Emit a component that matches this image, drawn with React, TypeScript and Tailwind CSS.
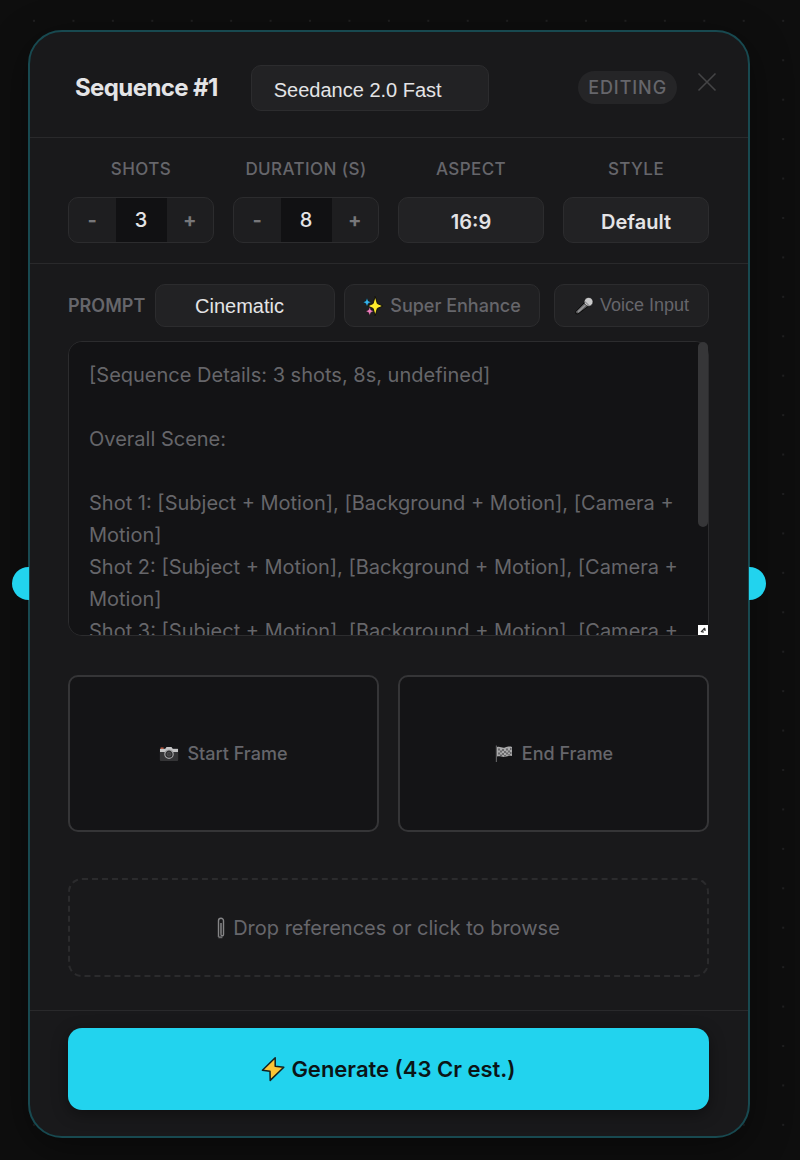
import { useState, type ReactNode } from 'react';

const template = `[Sequence Details: 3 shots, 8s, undefined]

Overall Scene:

Shot 1: [Subject + Motion], [Background + Motion], [Camera + Motion]
Shot 2: [Subject + Motion], [Background + Motion], [Camera + Motion]
Shot 3: [Subject + Motion], [Background + Motion], [Camera + Motion]

Style: [Lighting], [Mood], [Color]

Notes:
`;

const selectClass =
  "appearance-none rounded-[10px] border border-[#2c2c2e] bg-[#222224] text-xl text-[#e4e4e6] outline-none";
const labelClass = "text-[17px] leading-6 font-medium tracking-wide text-[#66666b]";

function Sparkles() {
  return (
    <svg width="20" height="20" viewBox="0 0 20 20" aria-hidden="true">
      <path d="M12.2.4 14.3 7.600 20 10 14.300 12.400 12.200 19.600 10.100 12.400 4.600 10 10.100 7.600Z" fill="#fdea2c" stroke="#0a0a0a" strokeWidth=".9" strokeLinejoin="round" />
      <path d="M4 2 5.200 5 8 6.200 5.200 7.400 4 10.400 2.800 7.400 0 6.200 2.800 5Z" fill="#35b6ee" stroke="#0a0a0a" strokeWidth=".4" />
      <path d="M6.700 11 7.900 14 10.700 15.200 7.900 16.400 6.700 19.400 5.500 16.400 2.700 15.200 5.500 14Z" fill="#f17fc0" stroke="#0a0a0a" strokeWidth=".4" />
    </svg>
  );
}

function Microphone() {
  return (
    <svg width="20" height="20" viewBox="0 0 20 20" aria-hidden="true">
      <path d="M10.500 6.500 14 10.500 4 18 1.800 17.600 1.600 15.600Z" fill="#5b5b5d" stroke="#0a0a0a" strokeWidth="1" strokeLinejoin="round" />
      <path d="m11.500 8.800-7.500 7.200" stroke="#929294" strokeWidth="1.800" />
      <circle cx="14.600" cy="5.800" r="4.400" fill="#c9c9ca" stroke="#0a0a0a" strokeWidth=".6" />
      <path d="m11 5.600 4 4" stroke="#8b8b8e" strokeWidth="1.200" />
    </svg>
  );
}

function Camera() {
  return (
    <svg width="20" height="18" viewBox="0 0 20 18" aria-hidden="true">
      <rect x=".8" y="3" width="18.400" height="13" rx="1" fill="#343436" />
      <path d="M1 7V4h5.200l1.300-2h5l1.300 2H19v3Z" fill="#c4c4c5" />
      <path d="M1.600 3.200h3" stroke="#c06048" strokeWidth="1.500" />
      <circle cx="10" cy="9.200" r="4.200" fill="#29292b" stroke="#a3a3a5" strokeWidth="1.200" />
      <circle cx="10" cy="9.200" r="2" fill="#3c3c3e" stroke="#555557" strokeWidth=".8" />
    </svg>
  );
}

function Flag() {
  return (
    <svg width="20" height="20" viewBox="0 0 20 20" aria-hidden="true">
      <path d="M2.400 1.500V18" stroke="#5d5d5f" strokeWidth="1.200" />
      <path d="M3 3c3-1.200 5 1.400 8 .5 2.600-.8 4.400-1.500 7-.5v9c-3-1-4.500.3-7 .8-3 .5-5-1.300-8-.3Z" fill="#a9a9aa" />
      <path d="M4 4.500h2v2H4zm4 .5h2v2H8zm4-.5h2v2h-2zm4-.5h1.500v2H16zM6 6.500h2v2H6zm4 .5h2v2h-2zm4-.5h2v2h-2zM4 8.500h2v2H4zm4 .5h2v2H8zm4-.5h2v2h-2zm4-.5h1.500v2H16zM6 10.500h2v1.500H6zm4 .5h2v1.500h-2zm4-.8h2v1.300h-2z" fill="#69696b" />
    </svg>
  );
}

function Paperclip() {
  return (
    <svg width="8" height="22" viewBox="0 0 8 22" aria-hidden="true">
      <path d="M1.500 20V3.800a2.500 2.500 0 0 1 5 0V17.500a1.200 1.200 0 0 1-2.500 0V6" fill="none" stroke="#858587" strokeWidth="1.400" />
      <path d="M1.400 20.300h4M4 6v10" stroke="#6a6a6c" strokeWidth="2" />
    </svg>
  );
}

function Bolt() {
  return (
    <svg width="24" height="26" viewBox="0 0 24 26" aria-hidden="true">
      <path d="M14.200 1.800 1.400 14.200l7.600 1L9.200 24.400 22.800 11.200l-8.600-1Z" fill="#fcc436" stroke="#14201f" strokeWidth="1.500" strokeLinejoin="round" />
    </svg>
  );
}

function Stepper({ id, label, initial }: { id: string; label: string; initial: number }) {
  const [value, setValue] = useState(initial);

  return (
    <div className="flex flex-col items-center gap-4">
      <label htmlFor={id} className={labelClass}>{label}</label>
      <div className="flex h-[46px] w-full overflow-hidden rounded-[10px] border border-[#2c2c2e] bg-[#1e1e20]">
        <button
          type="button"
          aria-label={`Decrease ${label}`}
          className="flex-1 text-xl font-bold text-[#77777a]"
          onClick={() => setValue(Math.max(1, value - 1))}
        >
          -
        </button>
        <input
          id={id}
          className="w-[51px] bg-[#111113] text-center text-xl font-medium text-[#e4e4e6] outline-none"
          value={value}
          onChange={(e) => setValue(Number(e.target.value) || 1)}
        />
        <button
          type="button"
          aria-label={`Increase ${label}`}
          className="flex-1 text-xl font-bold text-[#77777a]"
          onClick={() => setValue(value + 1)}
        >
          +
        </button>
      </div>
    </div>
  );
}

function SelectField({ id, label, options }: { id: string; label: string; options: string[] }) {
  return (
    <div className="flex flex-col items-center gap-4">
      <label htmlFor={id} className={labelClass}>{label}</label>
      <select id={id} className={selectClass + " h-[46px] w-full pt-1 text-center font-semibold"}>
        {options.map((option) => (
          <option key={option}>{option}</option>
        ))}
      </select>
    </div>
  );
}

function FrameButton({ icon, children }: { icon: ReactNode; children: ReactNode }) {
  return (
    <button
      type="button"
      className="flex h-[157px] items-center justify-center gap-2 rounded-[10px] border-2 border-[#353537] bg-[#141416] text-[18px] font-medium text-[#66666b]"
    >
      {icon}
      {children}
    </button>
  );
}

export default function App() {
  const [prompt, setPrompt] = useState(template);

  return (
    <main className="relative min-h-screen bg-[#0e0e0e] pt-[30px] pr-[50px] pb-[22px] pl-7 font-['Inter',sans-serif]">
      {/* Canvas dots */}
      <svg className="absolute inset-0 h-full w-full" aria-hidden="true">
        <defs>
          <pattern id="dots" x="14.300" y="1.100" width="39.430" height="39.430" patternUnits="userSpaceOnUse">
            <circle cx="19.700" cy="19.700" r="1" fill="#252526" />
          </pattern>
        </defs>
        <rect width="100%" height="100%" fill="url(#dots)" />
      </svg>

      <section className="relative rounded-[34px] border-2 border-[#184950] bg-[#19191b] shadow-[0_10px_40px_rgba(0,0,0,0.4)]">
        {/* Connection handles */}
        <span className="absolute top-[535px] -left-[18px] h-[33px] w-[17px] rounded-l-full bg-[#22d3ee]" />
        <span className="absolute top-[535px] -right-[18px] h-[33px] w-[17px] rounded-r-full bg-[#22d3ee]" />

        {/* Header */}
        <header className="flex h-[106px] items-center border-b border-[#29292b] pt-[6px] pr-[31px] pl-[45px]">
          <h1 className="text-2xl font-bold tracking-tight whitespace-nowrap text-[#e4e4e6]">Sequence #1</h1>
          <select
            aria-label="Model"
            className={selectClass + " ml-[33px] h-[46px] w-[238px] pt-1 pl-[22px] font-['Liberation_Sans',sans-serif]"}
          >
            <option>Seedance 2.0 Fast</option>
            <option>Seedance 2.0</option>
          </select>
          <span className="ml-auto flex h-[33px] items-center rounded-full bg-[#252527] px-[10px] text-[18px] font-medium tracking-wider text-[#66666b]">
            EDITING
          </span>
          <button type="button" aria-label="Close" className="mb-3 ml-5">
            <svg width="20" height="20" viewBox="0 0 20 20" aria-hidden="true">
              <path d="m1.500 1.500 17 17m0-17-17 17" stroke="#444446" strokeWidth="1.600" />
            </svg>
          </button>
        </header>

        {/* Sequence settings */}
        <div className="grid grid-cols-4 gap-[19px] border-b border-[#29292b] pt-[19px] pr-[39px] pb-5 pl-[38px]">
          <Stepper id="shots" label="SHOTS" initial={3} />
          <Stepper id="duration" label="DURATION (S)" initial={8} />
          <SelectField id="aspect" label="ASPECT" options={['16:9', '9:16', '1:1']} />
          <SelectField id="style" label="STYLE" options={['Default', 'Anime', 'Noir']} />
        </div>

        <div className="pt-5 pr-[39px] pb-[33px] pl-[38px]">
          {/* Prompt toolbar */}
          <div className="flex h-[43px] items-center">
            <label htmlFor="prompt" className="w-[87px] text-[18px] font-semibold text-[#66666b]">PROMPT</label>
            <select
              aria-label="Prompt preset"
              className={selectClass + " h-full w-[180px] pr-[11px] text-center font-['Liberation_Sans',sans-serif]"}
            >
              <option>Cinematic</option>
              <option>Documentary</option>
            </select>
            <button
              type="button"
              className="ml-[9px] flex h-full w-[196px] items-center justify-center gap-[7px] rounded-[10px] border border-[#2c2c2e] bg-[#202022] text-[18px] font-medium whitespace-nowrap text-[#66666b]"
            >
              <Sparkles />
              Super Enhance
            </button>
            <button
              type="button"
              className="ml-auto flex h-full w-[155px] items-center justify-center gap-[6px] rounded-[10px] border border-[#2c2c2e] bg-[#202022] font-['Liberation_Sans',sans-serif] text-[18px] whitespace-nowrap text-[#66666b]"
            >
              <Microphone />
              Voice Input
            </button>
          </div>

          {/* Prompt text */}
          <div className="relative mt-[14px]">
            <textarea
              id="prompt"
              className="block h-[295px] w-full resize-none rounded-[14px] border border-[#2c2c2e] bg-[#131315] px-5 py-[17px] text-xl leading-8 text-[#66666a] outline-none [scrollbar-width:none]"
              value={prompt}
              onChange={(e) => setPrompt(e.target.value)}
            />
            <span className="absolute top-px right-px h-[185px] w-[10px] rounded-md bg-[#363638]" />
            <svg className="absolute right-px bottom-px bg-white" width="10" height="10" viewBox="0 0 10 10" aria-hidden="true">
              <path d="M3 7 7 3M4 7h2M5 4h2v2" stroke="#333" strokeWidth="1.200" fill="none" />
            </svg>
          </div>

          {/* Frames */}
          <div className="mt-[39px] grid grid-cols-2 gap-[19px]">
            <FrameButton icon={<Camera />}>Start Frame</FrameButton>
            <FrameButton icon={<Flag />}>End Frame</FrameButton>
          </div>

          <button
            type="button"
            className="mt-[46px] flex h-[99px] w-full items-center justify-center gap-2 rounded-[14px] border-2 border-dashed border-[#2b2b2d] text-xl text-[#66666b]"
          >
            <Paperclip />
            Drop references or click to browse
          </button>
        </div>

        <footer className="border-t border-[#29292b] pt-[17px] pr-[39px] pb-[26px] pl-[38px]">
          <button
            type="button"
            className="flex h-[82px] w-full items-center justify-center gap-[6px] rounded-[14px] bg-[#22d3ee] text-[22px] font-semibold text-[#0b1517] shadow-[0_4px_16px_rgba(0,0,0,0.4)]"
          >
            <Bolt />
            Generate (43 Cr est.)
          </button>
        </footer>
      </section>
    </main>
  );
}
